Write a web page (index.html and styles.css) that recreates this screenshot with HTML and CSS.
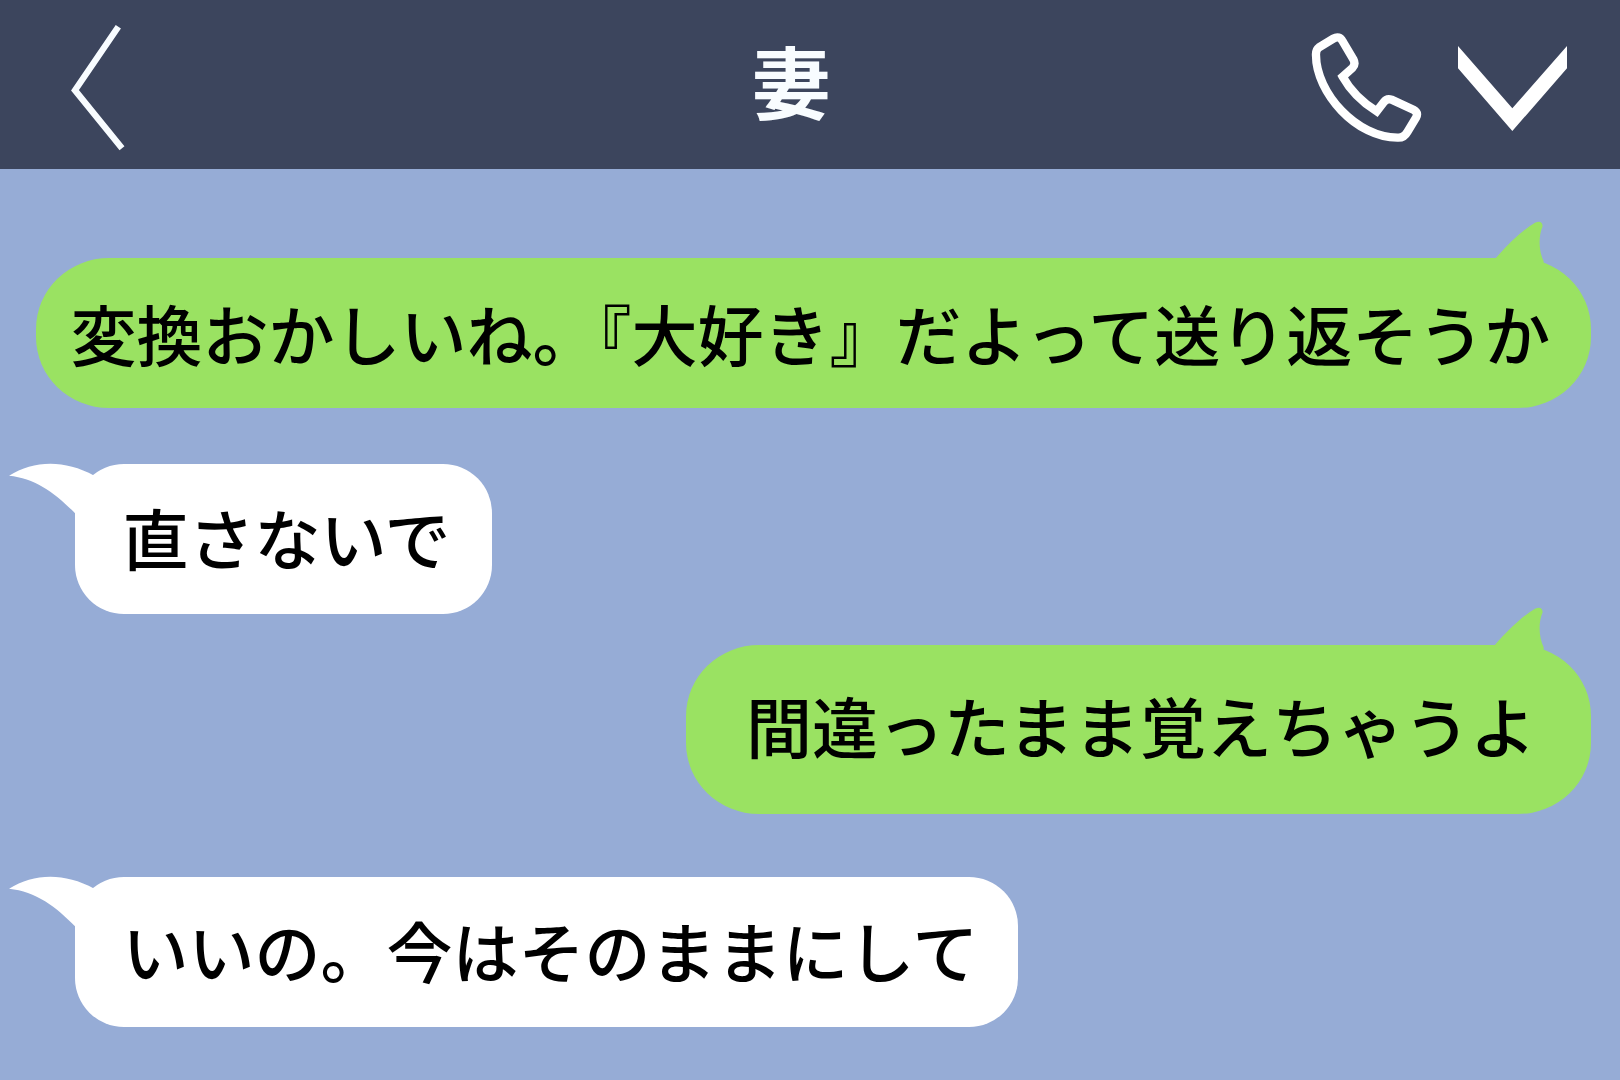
FILE: index.html
```
<!DOCTYPE html>
<html lang="ja">
<head>
    <meta charset="UTF-8">
    <meta name="viewport" content="width=device-width, initial-scale=1.0">
    <title>妻</title>
    <link rel="stylesheet" href="styles.css">
</head>
<body>
    <header class="chat-header">
        <svg class="back-icon" viewBox="90 70 168 390">
            <polyline points="235,81 105,272 246,446" />
        </svg>
        <h1>妻</h1>
        <div class="header-actions">
            <svg class="phone-icon" viewBox="60 95 339 339">
                <path d="M87 144 L130 118 Q148 107 158 126 L190 180 Q198 195 187 206 L158 232 Q192 293 260 336 L281 309 Q290 296 305 301 L370 331 Q386 340 378 355 L352 398 Q343 415 325 415 C200 417 78 280 78 168 Q77 151 87 144 Z" />
            </svg>
            <svg class="menu-icon" viewBox="503 137 327 255">
                <polygon points="503,137 666,324 830,137 830,204 666,392 503,204" />
            </svg>
        </div>
    </header>

    <main class="messages">
        <div class="bubble sent wide">
            <svg class="tail" viewBox="160 60 160 135"><path d="M160 178 H165 C205 132 248 91 286 68 Q308 59 309 79 C295 112 298 154 312 184 V195 H160 Z" /></svg>
            <p>変換おかしいね。『大好き』だよって送り返そうか</p>
        </div>
        <div class="bubble received short">
            <svg class="tail" viewBox="25 65 260 160"><path d="M25 106 C100 60 190 57 281 106 L285 225 L226 222 C167 160 105 114 25 106 Z" /></svg>
            <p>直さないで</p>
        </div>
        <div class="bubble sent tall">
            <svg class="tail" viewBox="160 60 160 135"><path d="M160 178 H165 C205 132 248 91 286 68 Q308 59 309 79 C295 112 298 154 312 184 V195 H160 Z" /></svg>
            <p>間違ったまま覚えちゃうよ</p>
        </div>
        <div class="bubble received long">
            <svg class="tail" viewBox="25 65 260 160"><path d="M25 106 C100 60 190 57 281 106 L285 225 L226 222 C167 160 105 114 25 106 Z" /></svg>
            <p>いいの。今はそのままにして</p>
        </div>
    </main>
</body>
</html>
```
FILE: styles.css
```
* {
    margin: 0;
    padding: 0;
    box-sizing: border-box;
}

body {
    font-family: 'Noto Sans CJK JP', sans-serif;
    background: #96acd6;
    color: #000;
    height: 100vh;
    overflow: hidden;
}

.chat-header {
    display: flex;
    align-items: flex-start;
    justify-content: space-between;
    height: 169px;
    padding: 0 53.5px 0 70px;
    background: #3c455d;
    color: #f8fcff;
}

.chat-header h1 {
    font-size: 79px;
    font-weight: 700;
    line-height: 100px;
    margin: 30px 0 0 147px;
}

.back-icon {
    width: 56px;
    height: 130px;
    margin-top: 23px;
    fill: none;
    stroke: #f8fcff;
    stroke-width: 19;
}

.header-actions {
    display: flex;
    gap: 35px;
}

.phone-icon {
    width: 113px;
    height: 113px;
    margin-top: 31px;
    fill: none;
    stroke: #fff;
    stroke-width: 25;
}

.menu-icon {
    width: 109px;
    height: 85px;
    margin-top: 45.5px;
    fill: #fff;
}

.messages {
    display: flex;
    flex-direction: column;
    align-items: flex-start;
    padding: 89px 29px 0 35.5px;
}

.bubble {
    position: relative;
    height: 150px;
}

.bubble p {
    font-size: 66px;
    font-weight: 500;
    line-height: 100px;
    white-space: nowrap;
}

.sent {
    align-self: flex-end;
    background: #9ae262;
    border-radius: 73px / 71px;
}

.received {
    margin-left: 39.5px;
    background: #fff;
    border-radius: 49px;
}

/* speech tails */
.tail {
    position: absolute;
}

.sent .tail {
    top: -38.5px;
    right: 45px;
    width: 53.3px;
    height: 45px;
    fill: #9ae262;
}

.received .tail {
    top: -1.5px;
    left: -66.2px;
    width: 86.7px;
    height: 53.3px;
    fill: #fff;
}

.wide {
    width: 1555.5px;
    padding: 24px 0 0 35px;
}

.short {
    width: 417px;
    margin-top: 55.5px;
    padding: 22.5px 0 0 47.5px;
}

.tall {
    width: 905.5px;
    height: 169px;
    margin-top: 31px;
    padding: 29.5px 0 0 60.5px;
}

.long {
    width: 942.5px;
    margin-top: 63px;
    padding: 22px 0 0 47.5px;
}
```
